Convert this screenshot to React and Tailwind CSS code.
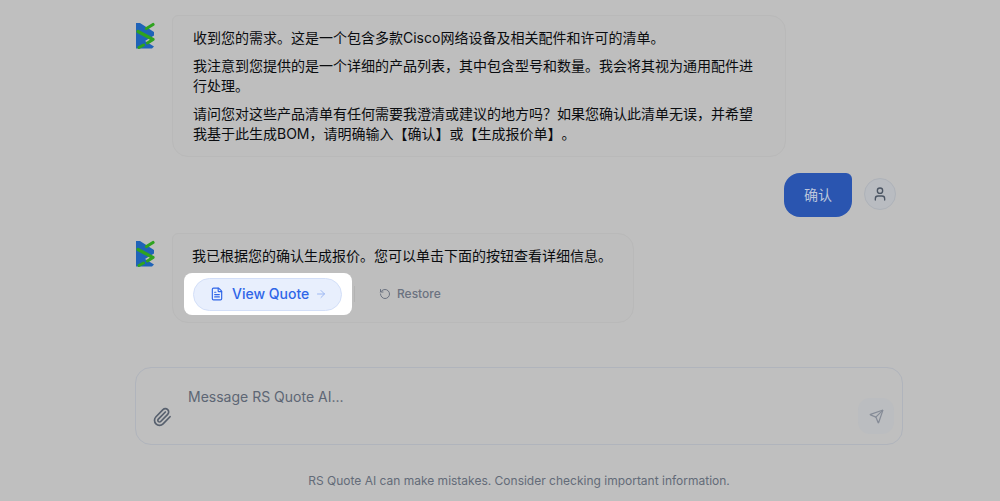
import { FileText, ArrowRight, RotateCcw, User, Paperclip, Send } from 'lucide-react'

const cjk = "font-['Inter','Noto_Sans_CJK_SC',sans-serif]"

function Logo() {
  return (
    <svg width="20" height="28" viewBox="0 0 20 28" className="shrink-0 mt-[6px]">
      <path d="M1 2 L5 2 L19 11 L19 14.5 L10 20 L19 25.5 L17 27.5 L1 27.5 Z" fill="#1f63b8" />
      <path d="M18 3.5 L11.5 7.5" fill="none" stroke="#2fa31f" strokeWidth="3.2" strokeLinecap="round" />
      <path d="M3 10.5 L18 18.5 L12.5 22" fill="none" stroke="#2fa31f" strokeWidth="3.2" strokeLinecap="round" strokeLinejoin="round" />
      <path d="M8.5 24 L4 26.5" fill="none" stroke="#2fa31f" strokeWidth="3" strokeLinecap="round" />
    </svg>
  )
}

export default function App() {
  return (
    <div className={`w-full h-[501px] overflow-hidden bg-[#bfbfbf] flex flex-col pl-[38px] [text-spacing-trim:space-all] ${cjk}`}>
      <div className="flex-1 w-[768px] mx-auto flex flex-col pt-[15px]">
        <div className="flex gap-[17px]">
          <Logo />
          <div className="w-[614px] rounded-2xl rounded-tl-md border border-[#b9b9b9] bg-[#bebebe] px-5 py-3 text-sm leading-5 text-[#0a0c0f] flex flex-col gap-2">
            <p>收到您的需求。这是一个包含多款Cisco网络设备及相关配件和许可的清单。</p>
            <p>我注意到您提供的是一个详细的产品列表，其中包含型号和数量。我会将其视为通用配件进行处理。</p>
            <p>请问您对这些产品清单有任何需要我澄清或建议的地方吗？如果您确认此清单无误，并希望我基于此生成BOM，请明确输入【确认】或【生成报价单】。</p>
          </div>
        </div>

        <div className="flex justify-end items-start gap-3 mt-4 pr-[7px]">
          <div className="w-[68px] h-[44px] rounded-2xl rounded-tr-md bg-[#2a55b0] text-[#bcc6dc] text-sm flex items-center justify-center">
            确认
          </div>
          <div className="w-8 h-8 mt-[5px] rounded-full bg-[#b9bcc1] border border-[#aeb2b9] flex items-center justify-center">
            <User size={16} className="text-[#4b5563]" />
          </div>
        </div>

        <div className="flex gap-[17px] mt-4">
          <Logo />
          <div className="w-[462px] h-[90px] rounded-2xl rounded-tl-md border border-[#b9b9b9] bg-[#bebebe] pl-[11px] pt-3 text-sm leading-5 text-[#0a0c0f]">
            <p className="pl-2">我已根据您的确认生成报价。您可以单击下面的按钮查看详细信息。</p>
            <div className="flex items-center mt-[7px]">
              <div className="w-[168px] h-[42px] bg-white rounded-lg flex items-center pl-[9px]">
                <button className="w-[149px] h-[33px] pl-4 rounded-full bg-[#e8effd] border border-[#d3dff8] text-[#2f66e8] text-sm font-medium flex items-center gap-2">
                  <FileText size={14} />
                  <span>View Quote</span>
                  <ArrowRight size={12} className="text-[#9db8f3] -ml-[2px]" />
                </button>
              </div>
              <div className="w-px h-4 bg-[#b3b3b3] ml-[2px]" />
              <div className="ml-6 flex items-center gap-[6px] text-xs font-medium text-[#6b7280]">
                <RotateCcw size={12} />
                <span>Restore</span>
              </div>
            </div>
          </div>
        </div>
      </div>

      <div className="w-[768px] h-[78px] mx-auto rounded-2xl border border-[#b0b4bc] bg-[#bfbfbf] flex items-stretch mb-7">
        <div className="w-[36px] flex items-end justify-end pb-[17px]">
          <Paperclip size={20} className="text-[#57606e]" />
        </div>
        <div className="flex-1 pl-4 pt-[19px] text-sm leading-5 text-[#5d6674]">Message RS Quote AI...</div>
        <div className="flex items-end pb-[10px] pr-2">
          <div className="w-9 h-9 rounded-xl bg-[#bbbdc0] flex items-center justify-center">
            <Send size={15} className="text-[#868c97]" />
          </div>
        </div>
      </div>

      <p className="text-xs text-center text-[#636b78] mb-3 leading-4">RS Quote AI can make mistakes. Consider checking important information.</p>
    </div>
  )
}
